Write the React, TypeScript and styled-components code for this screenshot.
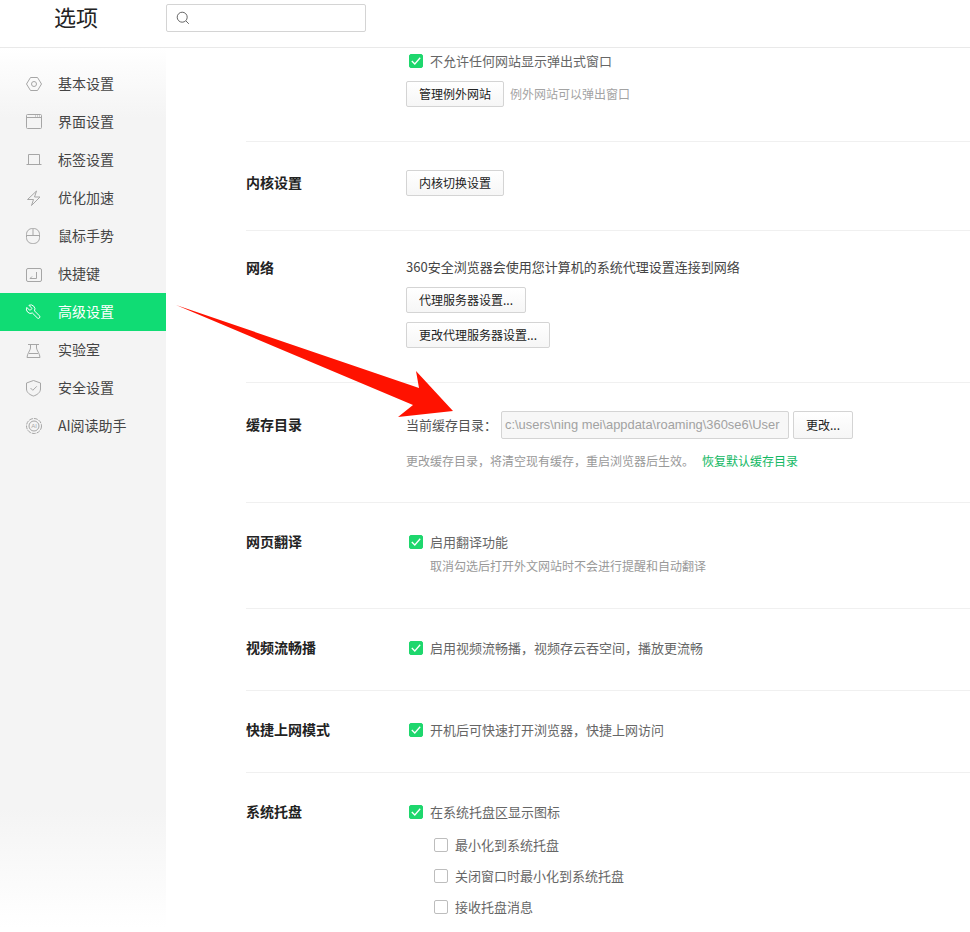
import React from "react";
import styled, { createGlobalStyle } from "styled-components";

const Global = createGlobalStyle`
  html, body { margin: 0; padding: 0; height: 932px; overflow: hidden; background: #fff; }
  body { font-family: "Noto Sans CJK SC", "Liberation Sans", sans-serif; color: #333; }
  * { box-sizing: border-box; }
`;

const Page = styled.div`
  position: relative;
  width: 970px;
  height: 932px;
  overflow: hidden;
  display: flex;
  flex-direction: column;
`;
const Header = styled.header`
  height: 48px;
  flex: none;
  display: flex;
  align-items: flex-start;
  border-bottom: 1px solid #e9e9e9;
`;
const Logo = styled.h1`
  width: 166px;
  margin: 0;
  padding-left: 54px;
  font-size: 22px;
  line-height: 32px;
  font-weight: 400;
  color: #222;
`;
const Search = styled.div`
  width: 200px;
  height: 28px;
  margin-top: 4px;
  border: 1px solid #d4d4d4;
  border-radius: 2px;
  display: flex;
  align-items: center;
  padding-left: 9px;
  color: #666;
`;
const Body = styled.div`
  flex: 1;
  display: flex;
  min-height: 0;
`;
const Sidebar = styled.nav`
  width: 166px;
  flex: none;
  padding-top: 17px;
  background: linear-gradient(to bottom, #fff 0, #f4f4f4 70px, #f4f4f4 760px, #fff 880px);
`;
const NavItem = styled.div<{ $active?: boolean }>`
  height: 38px;
  display: flex;
  align-items: center;
  padding-left: 25px;
  gap: 15px;
  font-size: 14px;
  background: ${(p) => (p.$active ? "#10dc74" : "transparent")};
  color: ${(p) => (p.$active ? "#fff" : "#444")};
`;
const NavIcon = styled.svg<{ $active?: boolean }>`
  width: 18px;
  height: 18px;
  flex: none;
  fill: none;
  stroke: ${(p) => (p.$active ? "#fff" : "#a6a6a6")};
`;
const NavLabel = styled.span`
  padding-bottom: 2px;
`;
const Main = styled.main`
  flex: 1;
  padding-left: 80px;
  min-width: 0;
`;
const Section = styled.section<{ $h: number; $pt: number; $last?: boolean }>`
  height: ${(p) => p.$h}px;
  padding-top: ${(p) => p.$pt}px;
  display: grid;
  grid-template-columns: 160px 1fr;
  align-items: start;
  border-bottom: ${(p) => (p.$last ? "none" : "1px solid #f0f0f0")};
`;
const Title = styled.h2<{ $mt?: number }>`
  margin: ${(p) => p.$mt ?? -1}px 0 0;
  font-size: 14px;
  line-height: 20px;
  font-weight: 700;
  color: #222;
`;
const Stack = styled.div`
  display: flex;
  flex-direction: column;
  align-items: flex-start;
`;
const CheckRow = styled.label<{ $indent?: boolean; $mt?: number }>`
  display: flex;
  align-items: center;
  height: 20px;
  gap: 7px;
  margin-top: ${(p) => p.$mt ?? 0}px;
  margin-left: ${(p) => (p.$indent ? "28px" : "3px")};
  font-size: 13px;
  color: #666;
`;
const CheckText = styled.span`
  padding-bottom: 2px;
`;
const Box = styled.span<{ $on?: boolean }>`
  width: 14px;
  height: 14px;
  border-radius: 2px;
  flex: none;
  display: flex;
  align-items: center;
  justify-content: center;
  background: ${(p) => (p.$on ? "#1ed76d" : "#fff")};
  border: 1px solid ${(p) => (p.$on ? "#1ed76d" : "#bdbdbd")};
`;
const Button = styled.button<{ $mt?: number; $ml?: number; $w: number; $h?: number }>`
  width: ${(p) => p.$w}px;
  height: ${(p) => p.$h ?? 26}px;
  margin-top: ${(p) => p.$mt ?? 0}px;
  margin-left: ${(p) => p.$ml ?? 0}px;
  padding: 0 0 2px;
  font: inherit;
  font-size: 12px;
  color: #222;
  background: linear-gradient(#fff, #f6f6f6);
  border: 1px solid #d4d4d4;
  border-radius: 2px;
  flex: none;
`;
const InlineRow = styled.div<{ $mt?: number }>`
  display: flex;
  align-items: center;
  margin-top: ${(p) => p.$mt ?? 0}px;
`;
const Hint = styled.span<{ $ml?: number }>`
  font-size: 12px;
  line-height: 20px;
  color: #a3a3a3;
  margin-left: ${(p) => p.$ml ?? 0}px;
`;
const SubHint = styled.div<{ $mt?: number; $ml?: number }>`
  font-size: 12px;
  line-height: 20px;
  color: #999;
  margin-top: ${(p) => p.$mt ?? 0}px;
  margin-left: ${(p) => p.$ml ?? 0}px;
`;
const Link = styled.a`
  color: #12b863;
  margin-left: 8px;
`;
const Text = styled.div`
  font-size: 13px;
  line-height: 20px;
  margin-top: -1px;
  margin-bottom: 1px;
  color: #444;
`;
const PathLabel = styled.span`
  width: 95px;
  padding-bottom: 2px;
  font-size: 13px;
  color: #555;
`;
const PathInput = styled.div`
  width: 288px;
  height: 28px;
  padding-left: 3px;
  border: 1px solid #d4d4d4;
  border-radius: 2px;
  background: #f7f7f7;
  color: #a2a2a2;
  font-family: "Liberation Sans", sans-serif;
  font-size: 12.9px;
  line-height: 26px;
  white-space: nowrap;
`;
const Arrow = styled.svg`
  position: absolute;
  left: 0;
  top: 0;
  width: 970px;
  height: 932px;
  pointer-events: none;
`;

const Tick = () => (
  <svg width="10" height="8" viewBox="0 0 10 8" fill="none" stroke="#fff" strokeWidth="1.3">
    <path d="M.8 4l3 3L9.2.8" />
  </svg>
);
const Check = ({ on, indent, mt, children }: { on?: boolean; indent?: boolean; mt?: number; children: React.ReactNode }) => (
  <CheckRow $indent={indent} $mt={mt}>
    <Box $on={on}>{on && <Tick />}</Box>
    <CheckText>{children}</CheckText>
  </CheckRow>
);

const icons: React.ReactNode[] = [
  <><path d="M5.500 2.500h7l4 6.500-4 6.500h-7l-4-6.500z" /><circle cx="9" cy="9" r="2.500" /></>,
  <><rect x="1.500" y="1.500" width="15" height="14" rx="1" /><path d="M1.500 4.500h15" /><path d="M10 3h1M12 3h1M14 3h1" /></>,
  <path d="M3.500 13.500v-10h11v10M1.500 13.500h15" />,
  <path d="M11.500 2L2.500 10.500h6L6.500 16.500 15 8H9.500z" />,
  <><path d="M1.500 7.500c0-3.500 2.500-6 6-6h1c3.500 0 6 2.500 6 6v3c0 3.500-2.500 6-6 6h-1c-3.500 0-6-2.500-6-6z" /><path d="M1.500 8.500h13M8 1.500v7" /></>,
  <><rect x="1.500" y="3.500" width="15" height="13" rx="1.500" /><path d="M11.500 7v6.500H5M5 13.500l2-2" /></>,
  <path
    transform="translate(17 0.500) scale(-0.708 0.708)"
    strokeWidth="1.400"
    d="M14.700 6.300a1 1 0 0 0 0 1.400l1.600 1.600a1 1 0 0 0 1.400 0l3.770-3.770a6 6 0 0 1-7.940 7.940l-6.910 6.910a2.120 2.120 0 0 1-3-3l6.910-6.910a6 6 0 0 1 7.940-7.940l-3.760 3.760z"
  />,
  <><path d="M3 3.500h11M5.500 3.500V7c0 2-3.500 6-3.500 9.500h13C15 13 11.500 9 11.500 7V3.500" /><path d="M4 12.500h9" /></>,
  <><path d="M8.500 1.500l7 2.500v6c0 3.500-3.500 6-7 7-3.500-1-7-3.500-7-7V4z" /><path d="M5.500 9l2.300 2.300 4-4" /></>,
  <>
    <circle cx="9" cy="9" r="7.500" strokeDasharray="4 1" />
    <circle cx="9" cy="9" r="5" />
    <text x="9" y="11" textAnchor="middle" fontSize="6" stroke="none" fill="#a6a6a6" fontFamily="Liberation Sans, sans-serif">AI</text>
  </>,
];
const labels = ["基本设置", "界面设置", "标签设置", "优化加速", "鼠标手势", "快捷键", "高级设置", "实验室", "安全设置", "AI阅读助手"];

export default function App() {
  return (
    <Page>
      <Global />
      <Header>
        <Logo>选项</Logo>
        <Search>
          <svg width="14" height="14" viewBox="0 0 14 14" fill="none" stroke="currentColor" strokeWidth="1">
            <circle cx="6.200" cy="6.200" r="5" />
            <path d="M10 10l2.800 2.800" />
          </svg>
        </Search>
      </Header>
      <Body>
        <Sidebar>
          {labels.map((l, i) => (
            <NavItem key={l} $active={i === 6}>
              <NavIcon viewBox="0 0 18 18" $active={i === 6}>{icons[i]}</NavIcon>
              <NavLabel>{l}</NavLabel>
            </NavItem>
          ))}
        </Sidebar>
        <Main>
          <Section $h={94} $pt={3}>
            <span />
            <Stack>
              <Check on>不允许任何网站显示弹出式窗口</Check>
              <InlineRow $mt={10}>
                <Button $w={98}>管理例外网站</Button>
                <Hint $ml={6}>例外网站可以弹出窗口</Hint>
              </InlineRow>
            </Stack>
          </Section>
          <Section $h={89} $pt={28}>
            <Title $mt={2}>内核设置</Title>
            <Button $w={98}>内核切换设置</Button>
          </Section>
          <Section $h={152} $pt={27}>
            <Title>网络</Title>
            <Stack>
              <Text>360安全浏览器会使用您计算机的系统代理设置连接到网络</Text>
              <Button $w={120} $mt={9}>代理服务器设置...</Button>
              <Button $w={144} $mt={9}>更改代理服务器设置...</Button>
            </Stack>
          </Section>
          <Section $h={120} $pt={28}>
            <Title $mt={3}>缓存目录</Title>
            <Stack>
              <InlineRow>
                <PathLabel>当前缓存目录：</PathLabel>
                <PathInput>c:\users\ning mei\appdata\roaming\360se6\User</PathInput>
                <Button $w={60} $h={28} $ml={4}>更改...</Button>
              </InlineRow>
              <SubHint $mt={12}>更改缓存目录，将清空现有缓存，重启浏览器后生效。<Link>恢复默认缓存目录</Link></SubHint>
            </Stack>
          </Section>
          <Section $h={106} $pt={29}>
            <Title>网页翻译</Title>
            <Stack>
              <Check on>启用翻译功能</Check>
              <SubHint $mt={4} $ml={24}>取消勾选后打开外文网站时不会进行提醒和自动翻译</SubHint>
            </Stack>
          </Section>
          <Section $h={82} $pt={29}>
            <Title>视频流畅播</Title>
            <Check on>启用视频流畅播，视频存云吞空间，播放更流畅</Check>
          </Section>
          <Section $h={82} $pt={29}>
            <Title>快捷上网模式</Title>
            <Check on>开机后可快速打开浏览器，快捷上网访问</Check>
          </Section>
          <Section $h={160} $pt={29} $last>
            <Title>系统托盘</Title>
            <Stack>
              <Check on>在系统托盘区显示图标</Check>
              <Check indent mt={13}>最小化到系统托盘</Check>
              <Check indent mt={11}>关闭窗口时最小化到系统托盘</Check>
              <Check indent mt={11}>接收托盘消息</Check>
            </Stack>
          </Section>
        </Main>
      </Body>
      <Arrow viewBox="0 0 970 932">
        <polygon points="176,305 419,388 416,371 453,411 398,417 413,405" fill="#ff1200" />
      </Arrow>
    </Page>
  );
}
